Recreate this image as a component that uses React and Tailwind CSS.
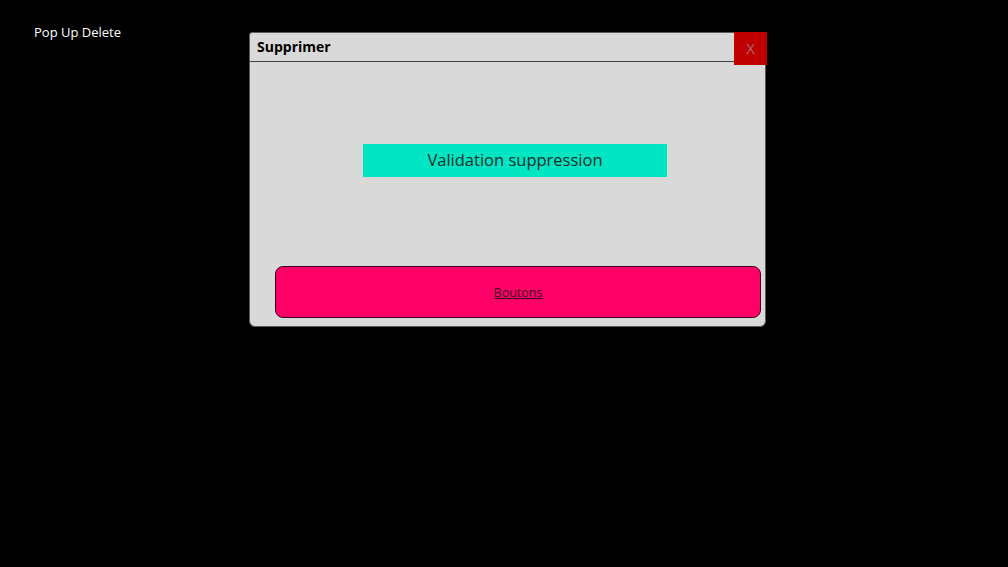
export default function App() {
  return (
    <div
      className="w-[1008px] h-[567px] bg-black flex items-start"
      style={{ fontFamily: '"Open Sans", "Liberation Sans", sans-serif' }}
    >
      <div className="w-[249px] shrink-0 pl-[34px] pt-[23px] text-[13px] text-white leading-[18px]">
        Pop Up Delete
      </div>
      <div className="relative shrink-0 mt-[32px] w-[517px] h-[295px] bg-[#d9d9d9] border border-[#5a5a5a] rounded-b-[6px] rounded-tl-[3px] flex flex-col">
        <div className="h-[29px] border-b border-[#404040] flex items-center pl-[7px] pb-[2px] text-[14px] font-bold text-black">
          Supprimer
        </div>
        <div className="absolute -top-px -right-[2px] w-[33px] h-[33px] bg-[#c00000] flex items-center justify-center text-[15px] text-[#b06868]">
          X
        </div>
        <div className="pl-[113px] pt-[82px]">
          <div className="w-[304px] h-[33px] bg-[#00e6c2] flex items-center justify-center text-[16.5px] text-[#1b2b2b]">
            Validation suppression
          </div>
        </div>
        <div className="pl-[25px] pr-[4px] pt-[89px]">
          <div className="h-[52px] bg-[#ff0066] border border-[#3a0018] rounded-[8px] flex items-center justify-center text-[12.5px] text-[#3a0a1e] underline pt-[3px]">
            Boutons
          </div>
        </div>
      </div>
    </div>
  );
}
